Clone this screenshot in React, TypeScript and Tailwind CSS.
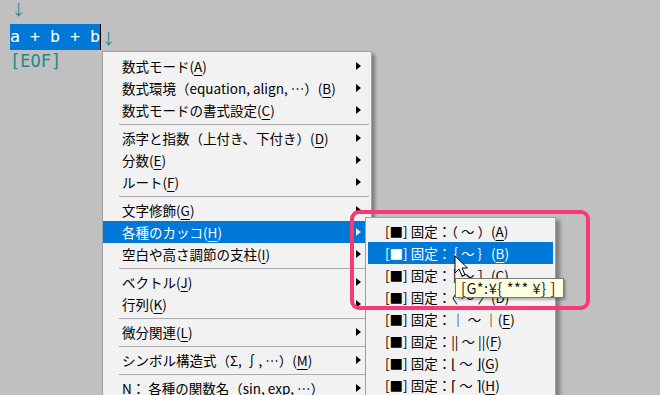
import React from 'react';

type Item = { label: React.ReactNode; sub?: boolean; active?: boolean } | 'sep';

const U = ({ c }: { c: string }) => <span className="underline underline-offset-[3px]">{c}</span>;

const mainItems: Item[] = [
  { label: <>数式モード(<U c="A" />)</>, sub: true },
  { label: <>数式環境（equation, align, …）(<U c="B" />)</>, sub: true },
  { label: <>数式モードの書式設定(<U c="C" />)</>, sub: true },
  'sep',
  { label: <>添字と指数（上付き、下付き）(<U c="D" />)</>, sub: true },
  { label: <>分数(<U c="E" />)</>, sub: true },
  { label: <>ルート(<U c="F" />)</>, sub: true },
  'sep',
  { label: <>文字修飾(<U c="G" />)</>, sub: true },
  { label: <>各種のカッコ(<U c="H" />)</>, sub: true, active: true },
  { label: <>空白や高さ調節の支柱(<U c="I" />)</>, sub: true },
  'sep',
  { label: <>ベクトル(<U c="J" />)</>, sub: true },
  { label: <>行列(<U c="K" />)</>, sub: true },
  'sep',
  { label: <>微分関連(<U c="L" />)</>, sub: true },
  'sep',
  { label: <>シンボル構造式（Σ, ∫, …）(<U c="M" />)</>, sub: true },
  'sep',
  { label: <><U c="N" />： 各種の関数名（sin, exp, …）</>, sub: true },
];

const brackets: [string, string][] = [
  ['（ ～ ）', 'A'],
  ['｛ ～ ｝', 'B'],
  ['［ ～ ］', 'C'],
  ['〈 ～ 〉', 'D'],
  ['｜ ～ ｜', 'E'],
  ['|| ～ ||', 'F'],
  ['⌊ ～ ⌋', 'G'],
  ['⌈ ～ ⌉', 'H'],
];

const tipText = '[G*:¥{ *** ¥} ]';

function Arrow({ light }: { light?: boolean }) {
  return (
    <svg width="5" height="8" viewBox="0 0 5 8" className="shrink-0">
      <path d="M0 0 L5 4 L0 8 Z" fill={light ? '#e8e8e8' : '#000'} />
    </svg>
  );
}

function Down() {
  return <span className="font-['Noto_Sans_CJK_JP',sans-serif] text-[15px] text-[#208a8a] leading-none">↓</span>;
}

export default function App() {
  return (
    <div lang="ja" className="relative w-[660px] h-[395px] overflow-hidden bg-[#c0c0c0] font-['Noto_Sans_CJK_JP',sans-serif] text-[13.5px] text-black">
      {/* editor text */}
      <div className="pl-[10px] font-['DejaVu_Sans_Mono',monospace] text-[16.6px] leading-none">
        <div className="h-[24px] pl-[1px] pt-[1px]">
          <Down />
        </div>
        <div className="h-[26px] flex items-center">
          <span className="h-[26px] flex items-center bg-[#0078d7] text-white whitespace-pre">a + b + b</span>
          <span className="w-px h-[26px] bg-black" />
          <Down />
        </div>
        <div className="h-[22px] flex items-center text-[#208a8a] text-[17px]">[EOF]</div>
      </div>

      {/* context menu */}
      <div className="absolute left-[102px] top-[51px] w-[270px] bg-[#f2f2f2] border border-[#a0a0a0] pt-[3px] shadow-[3px_3px_3px_rgba(0,0,0,0.35)]">
        {mainItems.map((it, i) =>
          it === 'sep' ? (
            <div key={i} className="h-[6px] flex items-center pl-[16px] pr-[2px]">
              <div className="w-full border-t border-[#ababab]" />
            </div>
          ) : (
            <div
              key={i}
              className={`h-[22px] flex items-center justify-between pl-[19px] pr-[10px] whitespace-nowrap ${
                it.active ? 'bg-[#0078d7] text-white' : ''
              }`}
            >
              <span>{it.label}</span>
              {it.sub && <Arrow light={it.active} />}
            </div>
          )
        )}
      </div>

      {/* submenu */}
      <div className="absolute left-[365px] top-[217px] w-[191px] h-[200px] bg-[#f2f2f2] border border-[#a0a0a0] pt-[2px] px-[2px] shadow-[4px_3px_4px_rgba(0,0,0,0.35)]">
        {brackets.map(([b, k], i) => (
          <div
            key={k}
            className={`h-[22px] flex items-center pl-[17px] whitespace-nowrap ${
              i === 1 ? 'bg-[#0078d7] text-white' : ''
            }`}
          >
            [■] 固定：{b}(<U c={k} />)
          </div>
        ))}
      </div>

      {/* mouse pointer */}
      <svg className="absolute left-[454px] top-[255px]" width="15" height="24" viewBox="0 0 15 24">
        <path d="M1 1 L1 18 L5 14 L8 21 L11 20 L8 13 L13.5 13 Z" fill="#fff" stroke="#000" strokeWidth="1" strokeLinejoin="round" />
      </svg>

      {/* tooltip */}
      <div className="absolute left-[455px] top-[278px] w-[109px] h-[20px] flex items-center pl-[5px] bg-[#ffffe1] border border-[#767676] text-[14.5px] tracking-[0.6px] text-[#1b1b1b] whitespace-pre shadow-[2px_2px_2px_rgba(0,0,0,0.25)]">
        {tipText}
      </div>

      {/* annotation */}
      <div className="absolute left-[350px] top-[210px] w-[240px] h-[100px] rounded-[9px] border-[4px] border-[#f93a72]" />
    </div>
  );
}
